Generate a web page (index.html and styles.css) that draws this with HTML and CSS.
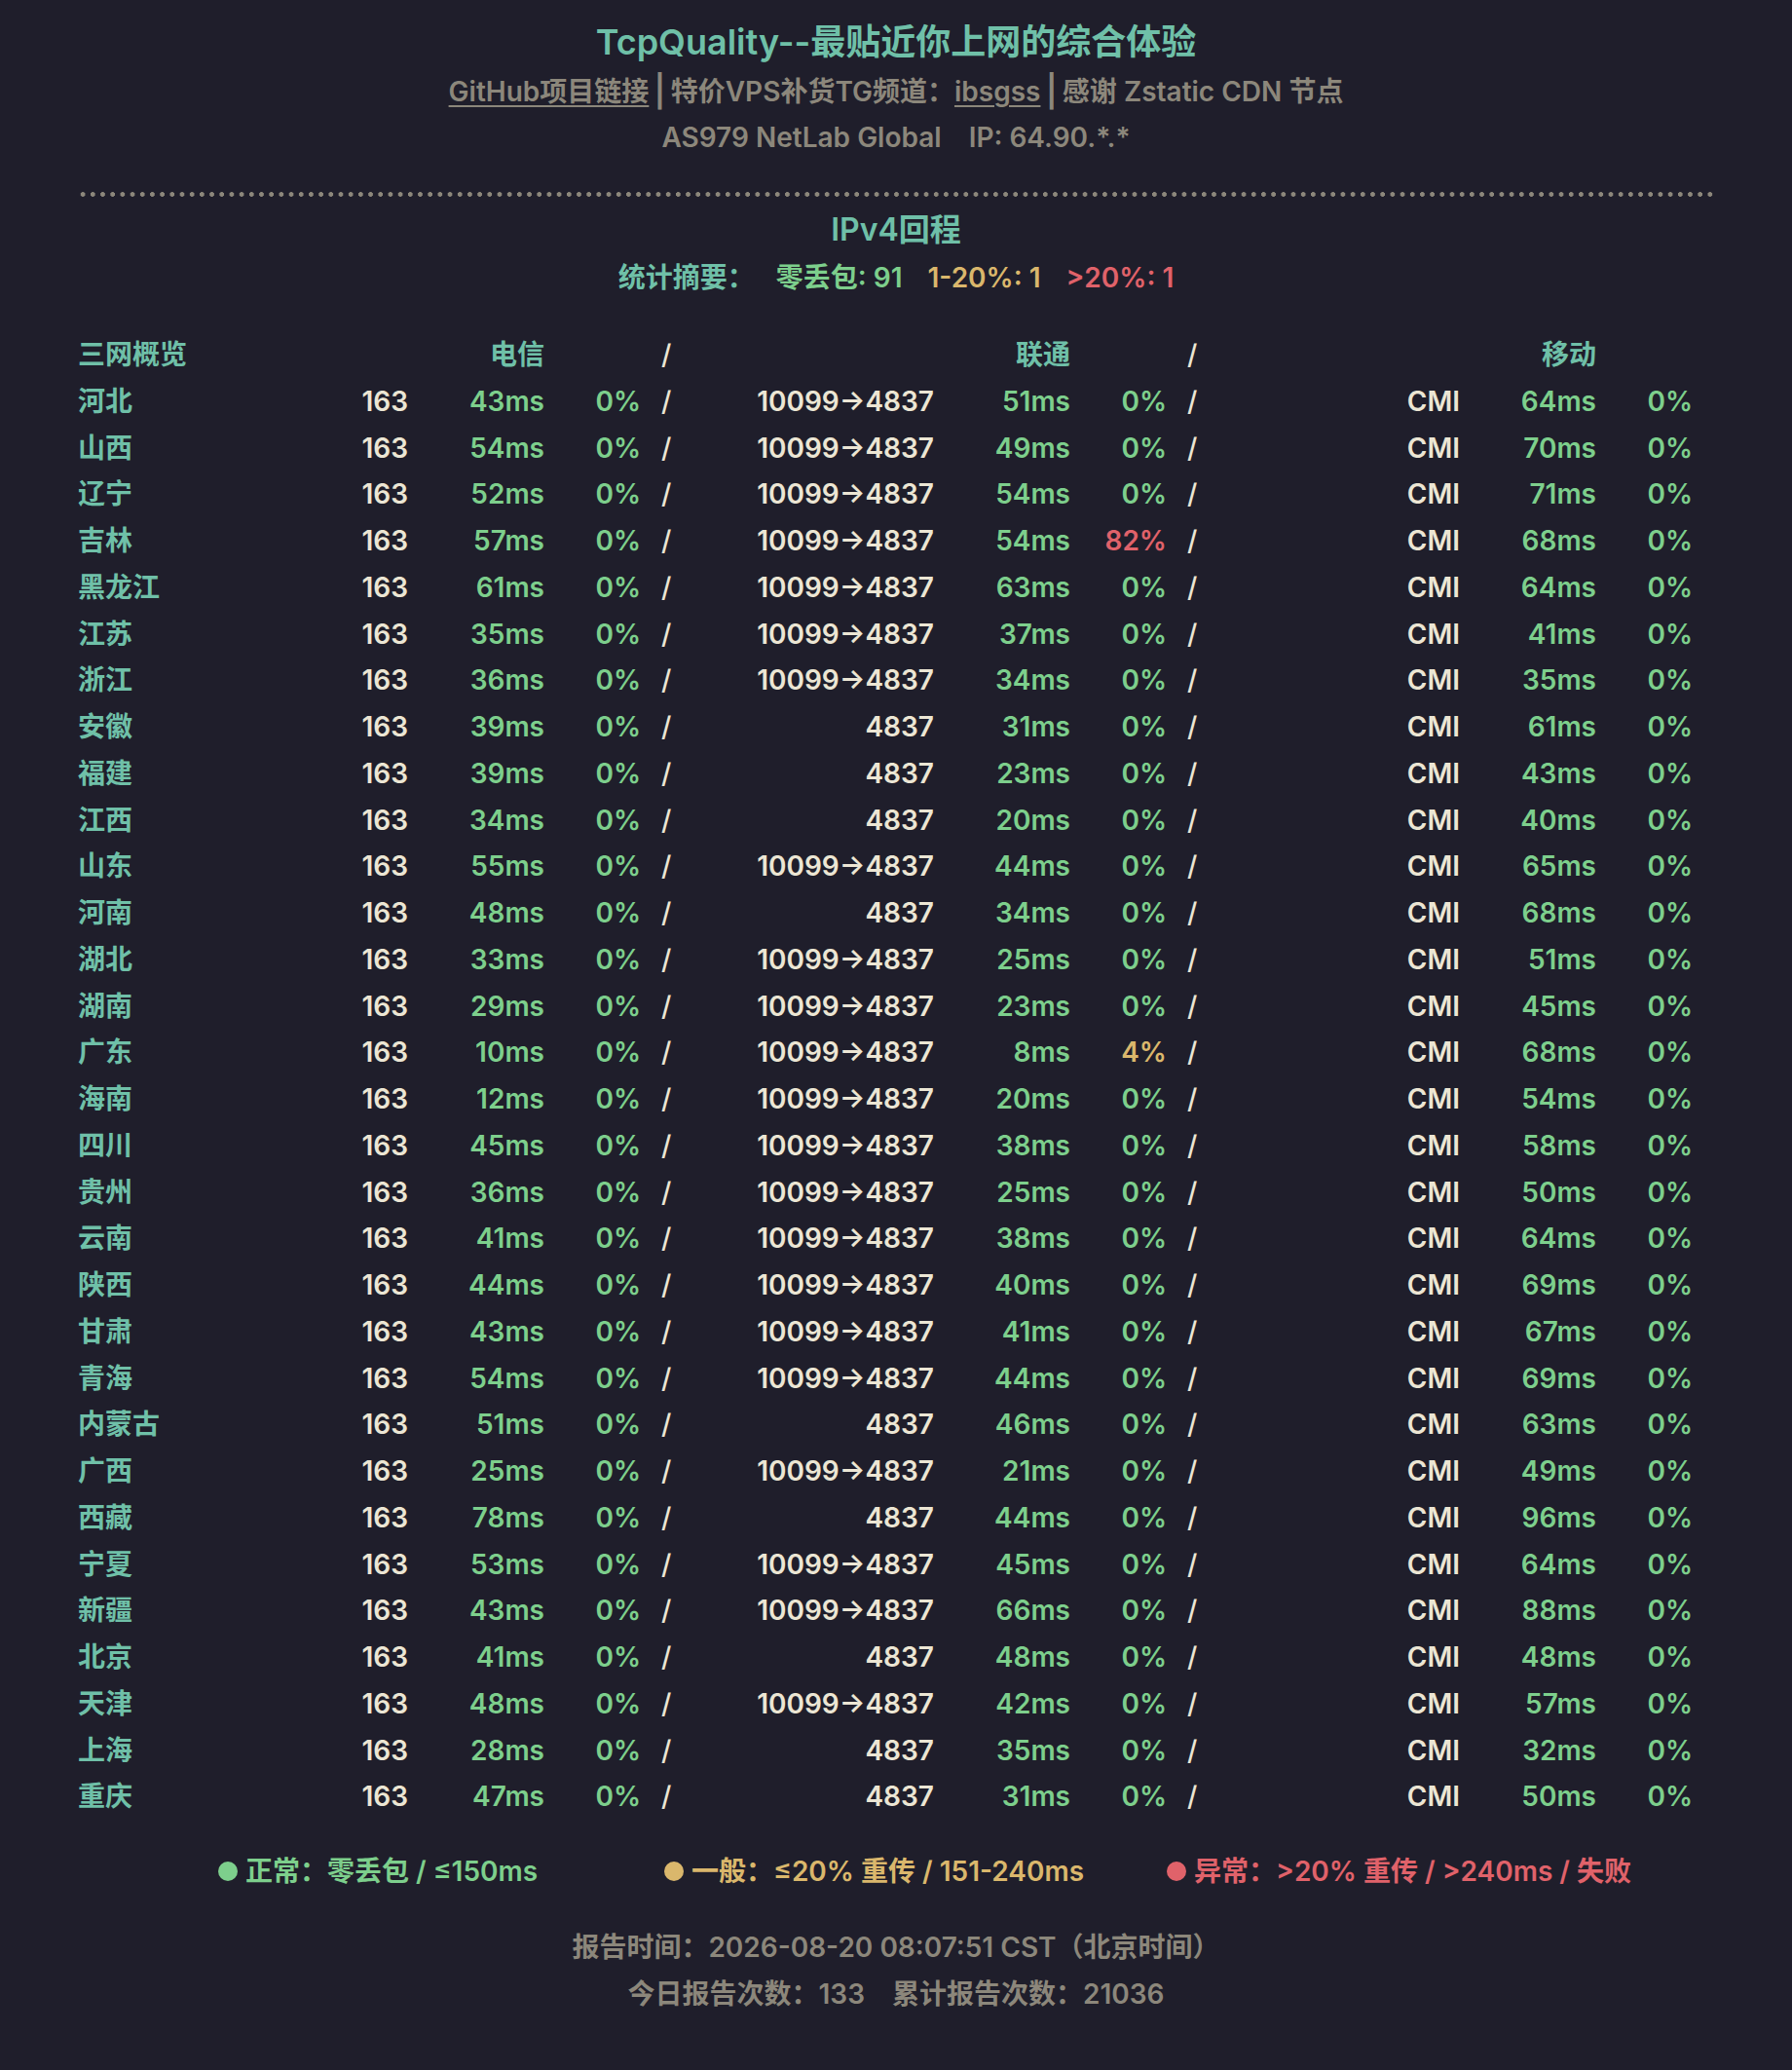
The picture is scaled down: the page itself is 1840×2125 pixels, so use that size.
FILE: index.html
```html
<!DOCTYPE html>
<html lang="zh-CN">
<head>
<meta charset="utf-8">
<title>TcpQuality</title>
<link rel="stylesheet" href="styles.css">
</head>
<body>
<div class="page">
  <header class="head">
    <h1 class="title">TcpQuality--最贴近你上网的综合体验</h1>
    <p class="links"><a href="#">GitHub项目链接</a><span class="bar">|</span>特价VPS补货TG频道：<a href="#">ibsgss</a><span class="bar">|</span>感谢 Zstatic CDN 节点</p>
    <p class="asline"><span>AS979 NetLab Global</span><span class="ip">IP: 64.90.*.*</span></p>
  </header>
  <div class="divider"></div>
  <h2 class="subtitle">IPv4回程</h2>
  <p class="summary"><span class="t">统计摘要：</span><span class="g">零丢包: 91</span><span class="y">1-20%: 1</span><span class="r">&gt;20%: 1</span></p>

  <div class="grid">
    <div class="row hdr"><span class="p">三网概览</span><span class="a"></span><span class="m t">电信</span><span class="l"></span><span class="s">/</span><span class="a"></span><span class="m t">联通</span><span class="l"></span><span class="s">/</span><span class="a"></span><span class="m t">移动</span><span class="l"></span></div>
    <div class="row"><span class="p">河北</span><span class="a">163</span><span class="m">43ms</span><span class="l">0%</span><span class="s">/</span><span class="a">10099→4837</span><span class="m">51ms</span><span class="l">0%</span><span class="s">/</span><span class="a">CMI</span><span class="m">64ms</span><span class="l">0%</span></div>
    <div class="row"><span class="p">山西</span><span class="a">163</span><span class="m">54ms</span><span class="l">0%</span><span class="s">/</span><span class="a">10099→4837</span><span class="m">49ms</span><span class="l">0%</span><span class="s">/</span><span class="a">CMI</span><span class="m">70ms</span><span class="l">0%</span></div>
    <div class="row"><span class="p">辽宁</span><span class="a">163</span><span class="m">52ms</span><span class="l">0%</span><span class="s">/</span><span class="a">10099→4837</span><span class="m">54ms</span><span class="l">0%</span><span class="s">/</span><span class="a">CMI</span><span class="m">71ms</span><span class="l">0%</span></div>
    <div class="row"><span class="p">吉林</span><span class="a">163</span><span class="m">57ms</span><span class="l">0%</span><span class="s">/</span><span class="a">10099→4837</span><span class="m">54ms</span><span class="l r">82%</span><span class="s">/</span><span class="a">CMI</span><span class="m">68ms</span><span class="l">0%</span></div>
    <div class="row"><span class="p">黑龙江</span><span class="a">163</span><span class="m">61ms</span><span class="l">0%</span><span class="s">/</span><span class="a">10099→4837</span><span class="m">63ms</span><span class="l">0%</span><span class="s">/</span><span class="a">CMI</span><span class="m">64ms</span><span class="l">0%</span></div>
    <div class="row"><span class="p">江苏</span><span class="a">163</span><span class="m">35ms</span><span class="l">0%</span><span class="s">/</span><span class="a">10099→4837</span><span class="m">37ms</span><span class="l">0%</span><span class="s">/</span><span class="a">CMI</span><span class="m">41ms</span><span class="l">0%</span></div>
    <div class="row"><span class="p">浙江</span><span class="a">163</span><span class="m">36ms</span><span class="l">0%</span><span class="s">/</span><span class="a">10099→4837</span><span class="m">34ms</span><span class="l">0%</span><span class="s">/</span><span class="a">CMI</span><span class="m">35ms</span><span class="l">0%</span></div>
    <div class="row"><span class="p">安徽</span><span class="a">163</span><span class="m">39ms</span><span class="l">0%</span><span class="s">/</span><span class="a">4837</span><span class="m">31ms</span><span class="l">0%</span><span class="s">/</span><span class="a">CMI</span><span class="m">61ms</span><span class="l">0%</span></div>
    <div class="row"><span class="p">福建</span><span class="a">163</span><span class="m">39ms</span><span class="l">0%</span><span class="s">/</span><span class="a">4837</span><span class="m">23ms</span><span class="l">0%</span><span class="s">/</span><span class="a">CMI</span><span class="m">43ms</span><span class="l">0%</span></div>
    <div class="row"><span class="p">江西</span><span class="a">163</span><span class="m">34ms</span><span class="l">0%</span><span class="s">/</span><span class="a">4837</span><span class="m">20ms</span><span class="l">0%</span><span class="s">/</span><span class="a">CMI</span><span class="m">40ms</span><span class="l">0%</span></div>
    <div class="row"><span class="p">山东</span><span class="a">163</span><span class="m">55ms</span><span class="l">0%</span><span class="s">/</span><span class="a">10099→4837</span><span class="m">44ms</span><span class="l">0%</span><span class="s">/</span><span class="a">CMI</span><span class="m">65ms</span><span class="l">0%</span></div>
    <div class="row"><span class="p">河南</span><span class="a">163</span><span class="m">48ms</span><span class="l">0%</span><span class="s">/</span><span class="a">4837</span><span class="m">34ms</span><span class="l">0%</span><span class="s">/</span><span class="a">CMI</span><span class="m">68ms</span><span class="l">0%</span></div>
    <div class="row"><span class="p">湖北</span><span class="a">163</span><span class="m">33ms</span><span class="l">0%</span><span class="s">/</span><span class="a">10099→4837</span><span class="m">25ms</span><span class="l">0%</span><span class="s">/</span><span class="a">CMI</span><span class="m">51ms</span><span class="l">0%</span></div>
    <div class="row"><span class="p">湖南</span><span class="a">163</span><span class="m">29ms</span><span class="l">0%</span><span class="s">/</span><span class="a">10099→4837</span><span class="m">23ms</span><span class="l">0%</span><span class="s">/</span><span class="a">CMI</span><span class="m">45ms</span><span class="l">0%</span></div>
    <div class="row"><span class="p">广东</span><span class="a">163</span><span class="m">10ms</span><span class="l">0%</span><span class="s">/</span><span class="a">10099→4837</span><span class="m">8ms</span><span class="l y">4%</span><span class="s">/</span><span class="a">CMI</span><span class="m">68ms</span><span class="l">0%</span></div>
    <div class="row"><span class="p">海南</span><span class="a">163</span><span class="m">12ms</span><span class="l">0%</span><span class="s">/</span><span class="a">10099→4837</span><span class="m">20ms</span><span class="l">0%</span><span class="s">/</span><span class="a">CMI</span><span class="m">54ms</span><span class="l">0%</span></div>
    <div class="row"><span class="p">四川</span><span class="a">163</span><span class="m">45ms</span><span class="l">0%</span><span class="s">/</span><span class="a">10099→4837</span><span class="m">38ms</span><span class="l">0%</span><span class="s">/</span><span class="a">CMI</span><span class="m">58ms</span><span class="l">0%</span></div>
    <div class="row"><span class="p">贵州</span><span class="a">163</span><span class="m">36ms</span><span class="l">0%</span><span class="s">/</span><span class="a">10099→4837</span><span class="m">25ms</span><span class="l">0%</span><span class="s">/</span><span class="a">CMI</span><span class="m">50ms</span><span class="l">0%</span></div>
    <div class="row"><span class="p">云南</span><span class="a">163</span><span class="m">41ms</span><span class="l">0%</span><span class="s">/</span><span class="a">10099→4837</span><span class="m">38ms</span><span class="l">0%</span><span class="s">/</span><span class="a">CMI</span><span class="m">64ms</span><span class="l">0%</span></div>
    <div class="row"><span class="p">陕西</span><span class="a">163</span><span class="m">44ms</span><span class="l">0%</span><span class="s">/</span><span class="a">10099→4837</span><span class="m">40ms</span><span class="l">0%</span><span class="s">/</span><span class="a">CMI</span><span class="m">69ms</span><span class="l">0%</span></div>
    <div class="row"><span class="p">甘肃</span><span class="a">163</span><span class="m">43ms</span><span class="l">0%</span><span class="s">/</span><span class="a">10099→4837</span><span class="m">41ms</span><span class="l">0%</span><span class="s">/</span><span class="a">CMI</span><span class="m">67ms</span><span class="l">0%</span></div>
    <div class="row"><span class="p">青海</span><span class="a">163</span><span class="m">54ms</span><span class="l">0%</span><span class="s">/</span><span class="a">10099→4837</span><span class="m">44ms</span><span class="l">0%</span><span class="s">/</span><span class="a">CMI</span><span class="m">69ms</span><span class="l">0%</span></div>
    <div class="row"><span class="p">内蒙古</span><span class="a">163</span><span class="m">51ms</span><span class="l">0%</span><span class="s">/</span><span class="a">4837</span><span class="m">46ms</span><span class="l">0%</span><span class="s">/</span><span class="a">CMI</span><span class="m">63ms</span><span class="l">0%</span></div>
    <div class="row"><span class="p">广西</span><span class="a">163</span><span class="m">25ms</span><span class="l">0%</span><span class="s">/</span><span class="a">10099→4837</span><span class="m">21ms</span><span class="l">0%</span><span class="s">/</span><span class="a">CMI</span><span class="m">49ms</span><span class="l">0%</span></div>
    <div class="row"><span class="p">西藏</span><span class="a">163</span><span class="m">78ms</span><span class="l">0%</span><span class="s">/</span><span class="a">4837</span><span class="m">44ms</span><span class="l">0%</span><span class="s">/</span><span class="a">CMI</span><span class="m">96ms</span><span class="l">0%</span></div>
    <div class="row"><span class="p">宁夏</span><span class="a">163</span><span class="m">53ms</span><span class="l">0%</span><span class="s">/</span><span class="a">10099→4837</span><span class="m">45ms</span><span class="l">0%</span><span class="s">/</span><span class="a">CMI</span><span class="m">64ms</span><span class="l">0%</span></div>
    <div class="row"><span class="p">新疆</span><span class="a">163</span><span class="m">43ms</span><span class="l">0%</span><span class="s">/</span><span class="a">10099→4837</span><span class="m">66ms</span><span class="l">0%</span><span class="s">/</span><span class="a">CMI</span><span class="m">88ms</span><span class="l">0%</span></div>
    <div class="row"><span class="p">北京</span><span class="a">163</span><span class="m">41ms</span><span class="l">0%</span><span class="s">/</span><span class="a">4837</span><span class="m">48ms</span><span class="l">0%</span><span class="s">/</span><span class="a">CMI</span><span class="m">48ms</span><span class="l">0%</span></div>
    <div class="row"><span class="p">天津</span><span class="a">163</span><span class="m">48ms</span><span class="l">0%</span><span class="s">/</span><span class="a">10099→4837</span><span class="m">42ms</span><span class="l">0%</span><span class="s">/</span><span class="a">CMI</span><span class="m">57ms</span><span class="l">0%</span></div>
    <div class="row"><span class="p">上海</span><span class="a">163</span><span class="m">28ms</span><span class="l">0%</span><span class="s">/</span><span class="a">4837</span><span class="m">35ms</span><span class="l">0%</span><span class="s">/</span><span class="a">CMI</span><span class="m">32ms</span><span class="l">0%</span></div>
    <div class="row"><span class="p">重庆</span><span class="a">163</span><span class="m">47ms</span><span class="l">0%</span><span class="s">/</span><span class="a">4837</span><span class="m">31ms</span><span class="l">0%</span><span class="s">/</span><span class="a">CMI</span><span class="m">50ms</span><span class="l">0%</span></div>
  </div>

  <div class="legend">
    <span class="item g"><i class="dot"></i>正常：零丢包 / ≤150ms</span>
    <span class="item y mid"><i class="dot"></i>一般：≤20% 重传 / 151-240ms</span>
    <span class="item r last"><i class="dot"></i>异常：&gt;20% 重传 / &gt;240ms / 失败</span>
  </div>

  <footer class="foot">
    <p>报告时间：2026-08-20 08:07:51 CST（北京时间）</p>
    <p>今日报告次数：133<span class="sp"></span>累计报告次数：21036</p>
  </footer>
</div>
</body>
</html>
```

FILE: styles.css
```css
* { box-sizing: border-box; }
html, body {
  margin: 0;
  padding: 0;
  background: #1f1e2b;
}
body {
  font-family: Inter, "Noto Sans CJK SC", sans-serif;
  font-weight: 600;
  color: #ece6d4;
}
.page {
  width: 1680px;
  margin: 0 auto;
  padding-top: 18px;
}
p { margin: 0; }

.head { text-align: center; }
.title {
  margin: 0;
  font-size: 36px;
  line-height: 50px;
  font-weight: 600;
  color: #6fc0a8;
}
.links {
  font-size: 28px;
  line-height: 52px;
  color: #8c877b;
}
.links a {
  color: #8c877b;
  text-decoration: underline;
  text-decoration-thickness: 2px;
  text-underline-offset: 4px;
}
.bar {
  display: inline-block;
  margin: 0 6px;
  font-weight: 700;
  transform: scaleY(1.15);
}
.asline {
  font-size: 28px;
  line-height: 42px;
  color: #8c877b;
}
.ip { margin-left: 28px; }

.divider {
  margin-top: 35px;
  height: 5px;
  background-image: radial-gradient(circle, #8c877b 2.1px, transparent 2.7px);
  background-size: 10.2px 5px;
  background-repeat: repeat-x;
}
.subtitle {
  margin: 12px 0 0;
  text-align: center;
  font-size: 32px;
  line-height: 44px;
  font-weight: 600;
  color: #6fc0a8;
}
.summary {
  display: flex;
  justify-content: center;
  gap: 26px;
  font-size: 28px;
  line-height: 54px;
}
.summary .t { margin-right: -4px; }

.t { color: #6fc0a8; }
.g { color: #7dcf8c; }
.y { color: #dab76c; }
.r { color: #e0626a; }

.grid {
  margin-top: 29px;
  font-size: 28px;
}
.row {
  display: grid;
  grid-template-columns: 139px 200px 140px 99px 101px 200px 140px 99px 101px 200px 140px 99px;
  line-height: 47.75px;
  white-space: nowrap;
}
.row .p { color: #6fc0a8; }
.row .a { text-align: right; color: #ece6d4; }
.row .m { text-align: right; color: #7dcf8c; }
.row .m.t { color: #6fc0a8; }
.row .l { text-align: right; color: #7dcf8c; }
.row .l.r { color: #e0626a; }
.row .l.y { color: #dab76c; }
.row .s { padding-left: 21px; color: #ece6d4; font-weight: 500; }

.legend {
  display: flex;
  margin-top: 28px;
  padding-left: 144px;
  font-size: 28px;
  line-height: 48px;
}
.legend .mid { margin-left: 130px; }
.legend .last { margin-left: 85px; }
.item { display: inline-flex; align-items: center; }
.dot {
  display: inline-block;
  width: 20px;
  height: 20px;
  border-radius: 50%;
  background: currentColor;
  margin-right: 8px;
}

.foot {
  margin-top: 30px;
  text-align: center;
  font-size: 28px;
  line-height: 48px;
  color: #8c877b;
}
.sp { display: inline-block; width: 28px; }
```
